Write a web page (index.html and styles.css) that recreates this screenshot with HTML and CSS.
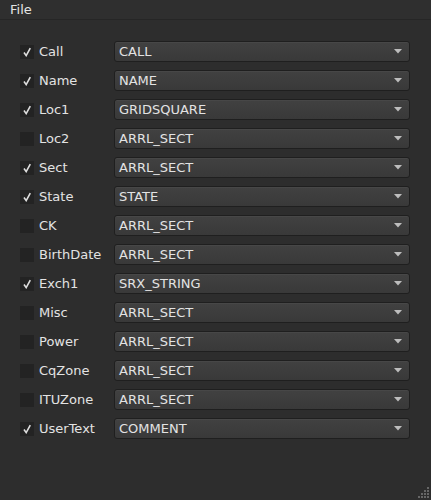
FILE: index.html
```html
<!DOCTYPE html>
<html lang="en">
<head>
    <meta charset="UTF-8">
    <title>Field Mapping</title>
    <link rel="stylesheet" href="styles.css">
</head>
<body>

    <div class="menubar"><span class="menu-item">File</span></div>

    <div class="fields" id="fields"></div>

    <div class="grip">
        <svg width="12" height="12" viewBox="0 0 12 12">
            <g fill="#666">
                <rect x="9" y="0" width="2" height="2"/>
                <rect x="6" y="3" width="2" height="2"/><rect x="9" y="3" width="2" height="2"/>
                <rect x="3" y="6" width="2" height="2"/><rect x="6" y="6" width="2" height="2"/><rect x="9" y="6" width="2" height="2"/>
                <rect x="0" y="9" width="2" height="2"/><rect x="3" y="9" width="2" height="2"/><rect x="6" y="9" width="2" height="2"/><rect x="9" y="9" width="2" height="2"/>
            </g>
        </svg>
    </div>

    <script>
        const rows = [
            ["Call", true, "CALL"],
            ["Name", true, "NAME"],
            ["Loc1", true, "GRIDSQUARE"],
            ["Loc2", false, "ARRL_SECT"],
            ["Sect", true, "ARRL_SECT"],
            ["State", true, "STATE"],
            ["CK", false, "ARRL_SECT"],
            ["BirthDate", false, "ARRL_SECT"],
            ["Exch1", true, "SRX_STRING"],
            ["Misc", false, "ARRL_SECT"],
            ["Power", false, "ARRL_SECT"],
            ["CqZone", false, "ARRL_SECT"],
            ["ITUZone", false, "ARRL_SECT"],
            ["UserText", true, "COMMENT"]
        ];

        const check = '<svg width="10" height="10" viewBox="0 0 10 10"><path d="M2 5.5 L4.2 8.6 L8.3 1.2" fill="none" stroke="#dedede" stroke-width="1.6"/></svg>';
        const arrow = '<svg width="8" height="5" viewBox="0 0 8 5"><path d="M0 0 H8 L4 4.5 Z" fill="#bdbdbd"/></svg>';

        const container = document.getElementById("fields");
        rows.forEach(([label, on, value]) => {
            const row = document.createElement("div");
            row.className = "row";
            row.innerHTML =
                `<span class="box">${on ? check : ""}</span>` +
                `<span class="label">${label}</span>` +
                `<div class="combo"><span>${value}</span>${arrow}</div>`;
            container.appendChild(row);
        });
    </script>

</body>
</html>
```

FILE: styles.css
```css
body {
    margin: 0;
    width: 431px;
    height: 500px;
    background-color: #2d2d2d;
    font-family: "DejaVu Sans", sans-serif;
    font-size: 13px;
    color: #e3e3e3;
    position: relative;
    overflow: hidden;
}
.menubar {
    height: 19px;
    border-bottom: 1px solid #262626;
    background-color: #2f2f2f;
    display: flex;
    align-items: center;
    padding-left: 10px;
}
.menu-item {
    line-height: 19px;
}
.fields {
    padding: 21px 0 0 20px;
    display: flex;
    flex-direction: column;
    gap: 8px;
}
.row {
    display: flex;
    align-items: center;
    height: 21px;
}
.box {
    width: 14px;
    height: 14px;
    background-color: #232323;
    display: flex;
    align-items: center;
    justify-content: center;
}
.label {
    margin-left: 5px;
    width: 75px;
}
.combo {
    width: 283px;
    height: 19px;
    border: 1px solid #1f1f1f;
    border-radius: 3px;
    background: linear-gradient(#414141, #393939);
    box-shadow: inset 0 1px 0 #474747;
    display: flex;
    align-items: center;
    justify-content: space-between;
    padding: 0 7px 0 4px;
}
.combo svg {
    display: block;
}
.grip {
    position: absolute;
    right: 1px;
    bottom: 1px;
    line-height: 0;
}
```
